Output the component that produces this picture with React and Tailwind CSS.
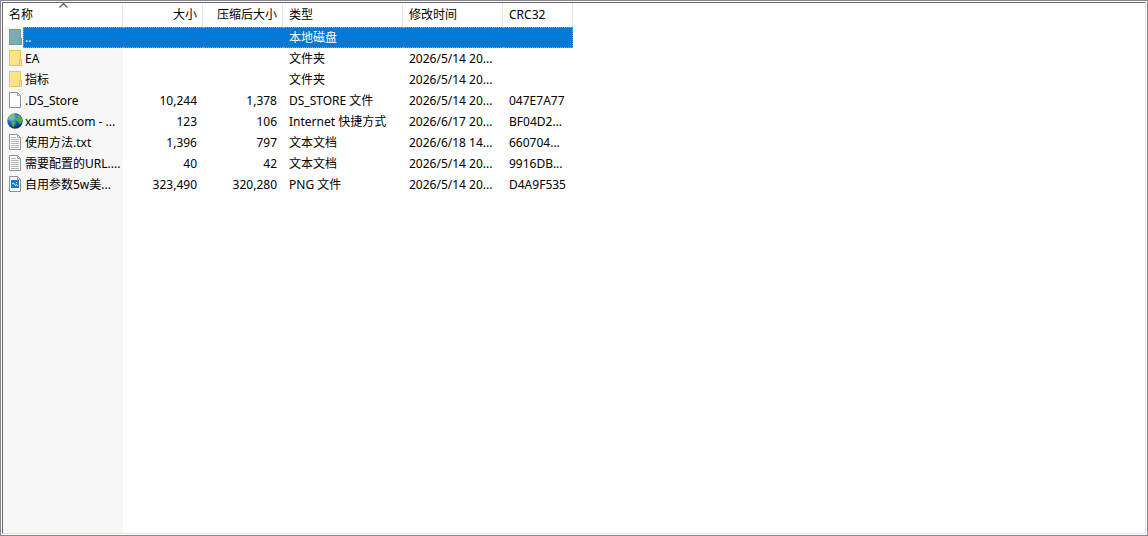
import { useState } from 'react';

const columns = [
  { label: '名称', width: 'w-[120px]', align: 'justify-start', sorted: true },
  { label: '大小', width: 'w-[80px]', align: 'justify-end' },
  { label: '压缩后大小', width: 'w-[80px]', align: 'justify-end' },
  { label: '类型', width: 'w-[120px]', align: 'justify-start' },
  { label: '修改时间', width: 'w-[100px]', align: 'justify-start' },
  { label: 'CRC32', width: 'w-[70px]', align: 'justify-start' },
];

const files = [
  { icon: 'up', name: '..', size: '', packed: '', type: '本地磁盘', modified: '', crc: '' },
  { icon: 'folder', name: 'EA', size: '', packed: '', type: '文件夹', modified: '2026/5/14 20...', crc: '' },
  { icon: 'folder', name: '指标', size: '', packed: '', type: '文件夹', modified: '2026/5/14 20...', crc: '' },
  { icon: 'blank', name: '.DS_Store', size: '10,244', packed: '1,378', type: 'DS_STORE 文件', modified: '2026/5/14 20...', crc: '047E7A77' },
  { icon: 'globe', name: 'xaumt5.com - ...', size: '123', packed: '106', type: 'Internet 快捷方式', modified: '2026/6/17 20...', crc: 'BF04D2...' },
  { icon: 'text', name: '使用方法.txt', size: '1,396', packed: '797', type: '文本文档', modified: '2026/6/18 14...', crc: '660704...' },
  { icon: 'text', name: '需要配置的URL....', size: '40', packed: '42', type: '文本文档', modified: '2026/5/14 20...', crc: '9916DB...' },
  { icon: 'image', name: '自用参数5w美...', size: '323,490', packed: '320,280', type: 'PNG 文件', modified: '2026/5/14 20...', crc: 'D4A9F535' },
];

function FolderIcon({ up }) {
  const fill = up ? '#7dacb5' : '#ffe38c';
  const stroke = up ? '#6f9f91' : '#eac35a';
  return (
    <svg viewBox="0 0 16 16" className="size-4 shrink-0" aria-hidden="true">
      <rect x="2.5" y="0.5" width="11" height="15" fill={fill} stroke={stroke} />
      <rect x="12.5" y="9.5" width="2" height="6" fill={fill} stroke={stroke} />
    </svg>
  );
}

function PageIcon({ children }) {
  return (
    <svg viewBox="0 0 16 16" className="size-4 shrink-0" aria-hidden="true">
      <path d="M2.5 0.5H10.5L13.5 3.5V15.5H2.5Z" fill="#fdfdfd" stroke="#929292" />
      <path d="M10.5 0.5V3.5H13.5" fill="none" stroke="#a6a6a6" />
      {children}
    </svg>
  );
}

function GlobeIcon() {
  return (
    <svg viewBox="0 0 16 16" className="size-4 shrink-0" aria-hidden="true">
      <defs>
        <radialGradient id="sea" cx="0.35" cy="0.3" r="0.75">
          <stop offset="0" stopColor="#8cc6f4" />
          <stop offset="0.45" stopColor="#1e6cc4" />
          <stop offset="1" stopColor="#08245f" />
        </radialGradient>
      </defs>
      <circle cx="8" cy="8" r="7.7" fill="url(#sea)" />
      <path d="M2 3.6L4 1.6L7 0.8L8 2L6.8 3.4L7.2 4.6L5.4 5.6L4.2 7.4L2.6 6.6L1 6.4Z" fill="#7cc56a" />
      <path d="M4.6 8.2L7.4 8.6L8.8 10.2L7.6 12L6.8 14.2L5.4 13L4.8 11Z" fill="#4fb046" />
      <path d="M9.6 2.2L12.2 2L14.4 4.6L15.2 7.6L14 10.4L12.4 11.4L11.4 8.4L9.2 7.4L8.8 5.2L10.4 4Z" fill="#4fb046" />
    </svg>
  );
}

function FileIcon({ kind }) {
  if (kind === 'up') return <FolderIcon up />;
  if (kind === 'folder') return <FolderIcon />;
  if (kind === 'globe') return <GlobeIcon />;
  if (kind === 'text') {
    return (
      <PageIcon>
        <path d="M4 3.5H9M4 5.5H12M4 7.5H12M4 9.5H12M4 11.5H12M4 13.5H12" stroke="#b4b4b4" />
      </PageIcon>
    );
  }
  if (kind === 'image') {
    return (
      <PageIcon>
        <rect x="4" y="4" width="8" height="8" fill="#0f7bd8" />
        <path d="M5 8L6.5 7L8.5 9.5L9.5 8.5L11 10" fill="none" stroke="#fff" />
        <rect x="9" y="6" width="1" height="1" fill="#fff" />
      </PageIcon>
    );
  }
  return <PageIcon />;
}

function FileRow({ file, selected, onSelect }) {
  // only the text part of the name cell is highlighted, the icon stays clear
  const cell = selected
    ? 'border-y border-dotted border-[#ff8728] bg-[#0078d7] text-white'
    : 'border-y border-transparent';
  return (
    <tr className="h-[21px] cursor-default" aria-selected={selected} onClick={onSelect}>
      <td className="bg-[#f7f7f7] p-0">
        <div className="flex h-[21px] pl-1">
          <div className="flex items-center pb-px">
            <FileIcon kind={file.icon} />
          </div>
          <span className={selected ? `${cell} flex-1 border-l pl-px leading-[19px]` : `${cell} flex-1 pl-0.5 leading-[19px]`}>
            {file.name}
          </span>
        </div>
      </td>
      <td className={`${cell} py-0 pr-1.5 pl-0 text-right leading-[19px]`}>{file.size}</td>
      <td className={`${cell} py-0 pr-1.5 pl-0 text-right leading-[19px]`}>{file.packed}</td>
      <td className={`${cell} py-0 pr-0 pl-1.5 leading-[19px]`}>{file.type}</td>
      <td className={`${cell} py-0 pr-0 pl-1.5 leading-[19px]`}>{file.modified}</td>
      <td className={selected ? `${cell} border-r py-0 pr-0 pl-1.5 leading-[19px]` : `${cell} py-0 pr-0 pl-1.5 leading-[19px]`}>
        {file.crc}
      </td>
    </tr>
  );
}

export default function App() {
  const [selected, setSelected] = useState(0);

  return (
    <main className="flex h-screen border border-[#828790] bg-white p-px font-['Noto_Sans','Noto_Sans_CJK_SC',sans-serif] text-xs text-black">
      <div className="flex flex-1 overflow-hidden border border-t-[#696969] border-r-[#e3e3e3] border-b-[#e3e3e3] border-l-[#696969]">
        <table className="h-full w-[570px] table-fixed border-separate border-spacing-0 whitespace-nowrap">
          <thead>
            <tr className="h-6">
              {columns.map((col) => (
                <th key={col.label} className={`${col.width} relative border-r border-[#e5e5e5] p-0 font-normal`}>
                  {col.sorted && (
                    <svg viewBox="0 0 9 5" className="absolute top-0 left-14 h-[5px] w-[9px]" aria-hidden="true">
                      <path d="M0.5 4.5L4.5 0.5L8.5 4.5" fill="none" stroke="#555" strokeWidth="1.2" />
                    </svg>
                  )}
                  <button type="button" className={`${col.align} flex h-6 w-full items-center pr-[5px] pl-1.5 leading-5`}>
                    {col.label}
                  </button>
                </th>
              ))}
            </tr>
          </thead>
          <tbody>
            {files.map((file, i) => (
              <FileRow key={file.name} file={file} selected={i === selected} onSelect={() => setSelected(i)} />
            ))}
            {/* empty space below the list, keeps the sorted column tinted */}
            <tr aria-hidden="true">
              <td className="bg-[#f7f7f7] p-0" />
              <td colSpan={5} className="p-0" />
            </tr>
          </tbody>
        </table>
      </div>
    </main>
  );
}
